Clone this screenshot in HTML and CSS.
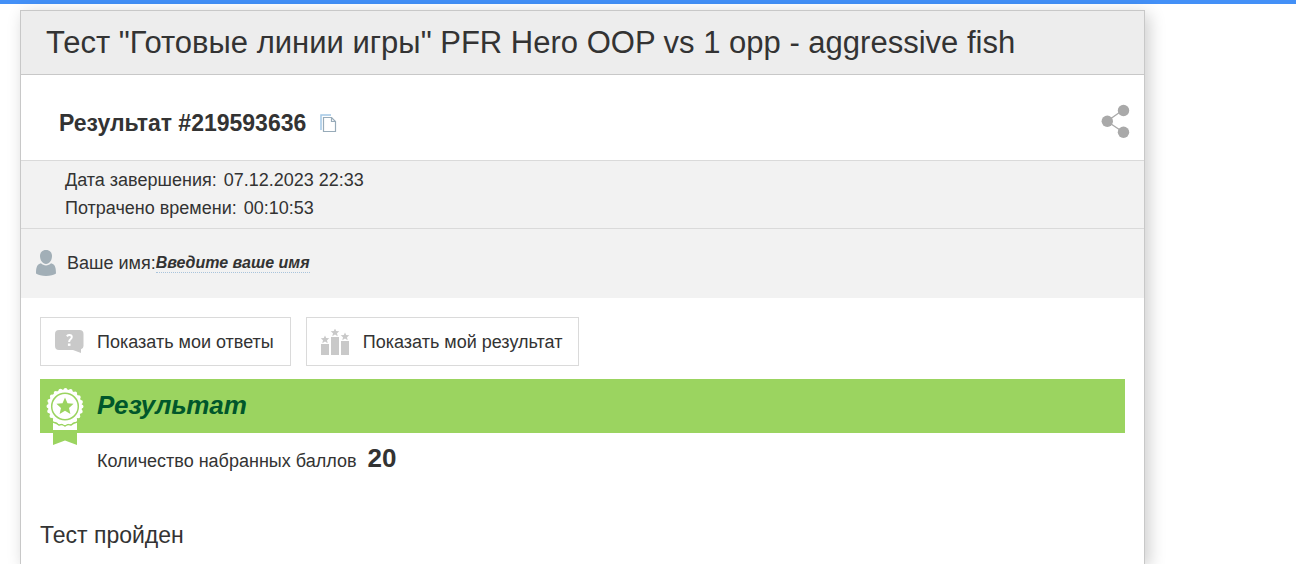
FILE: index.html
```
<!DOCTYPE html>
<html lang="ru">
<head>
    <meta charset="UTF-8">
    <meta name="viewport" content="width=device-width, initial-scale=1.0">
    <title>Результат теста</title>
    <link rel="stylesheet" href="styles.css">
</head>
<body>

    <div class="top-line"></div>

    <main class="card">
        <h1 class="card-title">Тест "Готовые линии игры" PFR Hero OOP vs 1 opp - aggressive fish</h1>

        <div class="result-head">
            <h2>Результат #219593636</h2>
            <button type="button" class="icon-button" aria-label="Скопировать">
                <svg width="17" height="19" viewBox="0 0 17 19" fill="none">
                    <path d="M1 16V1H11" stroke="#a3c8e6" stroke-width="1.500"/>
                    <path d="M3.500 3.500H11.500L15.500 7.500V17.500H3.500Z" fill="#fff" stroke="#98abb9" stroke-width="1.200"/>
                    <path d="M11.500 3.500V7.500H15.500" stroke="#98abb9" stroke-width="1.200"/>
                </svg>
            </button>
            <button type="button" class="icon-button share" aria-label="Поделиться">
                <svg width="30" height="34" viewBox="0 0 30 34">
                    <path d="M23 6L7 17.200L23 28" fill="none" stroke="#a9a9a9" stroke-width="1.300"/>
                    <circle cx="23.500" cy="6.500" r="5.700" fill="#a9a9a9"/>
                    <circle cx="7.300" cy="17.200" r="5.700" fill="#a9a9a9"/>
                    <circle cx="23.500" cy="28.300" r="5.700" fill="#a9a9a9"/>
                </svg>
            </button>
        </div>

        <div class="meta">
            <p><span>Дата завершения:</span> <span>07.12.2023 22:33</span></p>
            <p><span>Потрачено времени:</span> <span>00:10:53</span></p>
        </div>

        <div class="user">
            <svg width="20" height="26" viewBox="0 0 20 26" fill="#a2afb7">
                <path d="M10 0C13.800 0 16 2.600 16 6C16 10.200 13.400 14 10 14C6.600 14 4 10.200 4 6C4 2.600 6.200 0 10 0Z"/>
                <path d="M5 13.200C6.300 14.600 8 15.400 10 15.400C12 15.400 13.700 14.600 15 13.200C18.500 14 20 16.500 20 23.500C18 25 14 26 10 26C6 26 2 25 0 23.500C0 16.500 1.500 14 5 13.200Z"/>
            </svg>
            <span class="user-label">Ваше имя:</span><a href="#" class="user-name">Введите ваше имя</a>
        </div>

        <div class="content">
            <div class="buttons">
                <button type="button" class="action">
                    <svg width="30" height="26" viewBox="0 0 30 26">
                        <path d="M4 1H24.500Q28.500 1 28.500 5V17Q28.500 19.500 26 20.300V24L18 21H4Q0 21 0 17V5Q0 1 4 1Z" fill="#c9c9c9"/>
                        <path d="M11.800 7.200Q13 6 14.500 6Q16.800 6 16.800 8.100Q16.800 9.300 15.500 10.200Q14.200 11.100 14.200 12.600V13" fill="none" stroke="#fff" stroke-width="2"/>
                        <rect x="12.900" y="14.500" width="2.600" height="2.400" fill="#fff"/>
                    </svg>
                    Показать мои ответы
                </button>
                <button type="button" class="action">
                    <svg width="30" height="26" viewBox="0 0 30 26" fill="#c9c9c9">
                        <path d="M0 15H8V26H0ZM10 8H18V26H10ZM20 12H28V26H20Z"/>
                        <path id="star" d="M14 -0.500L15.200 2.100L18.300 2.300L16 4.300L16.700 7.200L14 5.600L11.300 7.200L12 4.300L9.700 2.300L12.800 2.100Z"/>
                        <use href="#star" x="-10" y="7"/>
                        <use href="#star" x="10" y="4"/>
                    </svg>
                    Показать мой результат
                </button>
            </div>

            <div class="banner">
                <svg class="medal" width="38" height="58" viewBox="0 0 38 58">
                    <path d="M7 31H31V42H7Z" fill="#fff"/>
                    <path d="M7 45H31V57L19 52.500L7 57Z" fill="#9bd460"/>
                    <path d="M7 34Q11 35 13 37Q16 35.500 19 38Q22 35.500 25 37Q27 35 31 34" fill="none" stroke="#9bd460" stroke-width="1.500"/>
                    <circle cx="19" cy="18.500" r="17" fill="#fff"/>
                    <circle cx="19" cy="18.500" r="16.500" fill="none" stroke="#fff" stroke-width="4" stroke-dasharray="0 5.184" stroke-linecap="round"/>
                    <circle cx="19" cy="18.500" r="13.300" fill="none" stroke="#9bd460" stroke-width="1.500"/>
                    <path d="M19 9.500L21.500 15.200L27.600 15.800L23 19.900L24.400 26L19 22.800L13.600 26L15 19.900L10.400 15.800L16.500 15.200Z" fill="#9bd460"/>
                </svg>
                <h2>Результат</h2>
            </div>

            <p class="score">Количество набранных баллов <strong>20</strong></p>

            <p class="message">Тест пройден</p>
        </div>
    </main>

</body>
</html>
```
FILE: styles.css
```
body {
    font-family: "Liberation Sans", Arial, sans-serif;
    font-size: 18px;
    line-height: 28px;
    color: #333;
    background-color: #fff;
    margin: 0;
    display: flex;
    flex-direction: column;
    min-height: 100vh;
}

h1, h2, p {
    margin: 0;
}

.top-line {
    height: 4px;
    background-color: #4390f7;
}

.card {
    box-sizing: border-box;
    flex: 1;
    width: calc(100% - 40px);
    max-width: 1125px;
    margin: 6px 20px 0;
    border: 1px solid #c8c8c8;
    border-bottom: none;
    background-color: #fff;
    box-shadow: 4px 4px 16px rgba(0, 0, 0, 0.2);
}

.card-title {
    padding: 14px 25px 13px;
    font-size: 31px;
    font-weight: normal;
    line-height: 36px;
    background-color: #ededed;
    border-bottom: 1px solid #c8c8c8;
}

.result-head {
    display: flex;
    align-items: center;
    gap: 14px;
    padding: 29px 14px 18px 38px;
}

.result-head h2 {
    font-size: 23px;
    line-height: 38px;
}

.icon-button {
    display: flex;
    padding: 0;
    border: none;
    background: none;
    cursor: pointer;
}

.share {
    align-self: flex-start;
    margin-left: auto;
}

.meta {
    padding: 5px 44px 6px;
    background-color: #f2f2f2;
    border-top: 1px solid #dadada;
    border-bottom: 1px solid #dadada;
}

.meta span {
    margin-right: 2px;
}

.user {
    display: flex;
    align-items: center;
    padding: 20px 15px 21px;
    background-color: #f2f2f2;
}

.user-label {
    margin-left: 11px;
}

.user-name {
    font-size: 16px;
    line-height: 18px;
    font-weight: bold;
    font-style: italic;
    color: #333;
    text-decoration: none;
    border-bottom: 1px dotted #a9c4dc;
}

.content {
    padding: 19px 19px 0;
}

.buttons {
    display: flex;
    flex-wrap: wrap;
    gap: 15px;
    margin-bottom: 13px;
}

.action {
    display: flex;
    align-items: center;
    gap: 12px;
    padding: 11px 16px 10px 14px;
    font: inherit;
    line-height: 26px;
    color: #333;
    background-color: #fff;
    border: 1px solid #dadada;
    cursor: pointer;
}

.banner {
    position: relative;
    padding: 7px 57px 9px;
    background-color: #9bd460;
}

.banner h2 {
    font-size: 26px;
    line-height: 38px;
    font-style: italic;
    color: #00572b;
}

/* ribbon hangs below the banner */
.medal {
    position: absolute;
    left: 6px;
    top: 9px;
}

.score {
    padding: 11px 57px;
}

.score strong {
    margin-left: 6px;
    font-size: 26px;
}

.message {
    margin-top: 35px;
    font-size: 23px;
}
```
